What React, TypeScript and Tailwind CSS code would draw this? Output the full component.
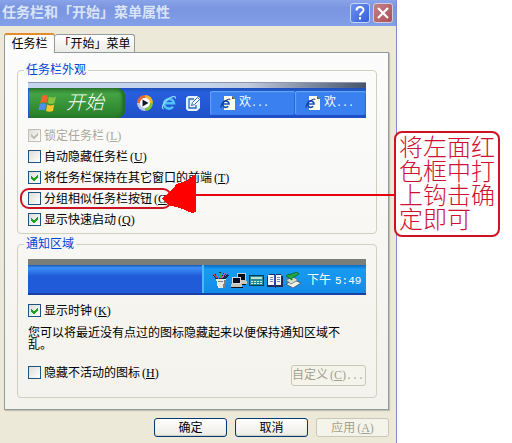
import React, { useState } from "react";

const AccessKey = ({ letter }: { letter: string }) => (
  <span className="ml-0.5">
    (<u className="underline-offset-1">{letter}</u>)
  </span>
);

const Check = ({
  label,
  letter,
  defaultChecked = false,
  disabled = false,
}: {
  label: string;
  letter: string;
  defaultChecked?: boolean;
  disabled?: boolean;
}) => {
  const [checked, setChecked] = useState(defaultChecked);
  return (
    <label className={disabled ? "flex h-[21px] items-center text-[#aca899]" : "flex h-[21px] items-center text-black"}>
      <span className="mr-[3px] grid size-[13px] shrink-0">
        <input
          type="checkbox"
          checked={checked}
          disabled={disabled}
          onChange={(e) => setChecked(e.target.checked)}
          className="col-start-1 row-start-1 size-[13px] appearance-none border border-[#1d5281] bg-linear-to-br from-[#dcdcd7] to-white disabled:border-[#c2c0b4]"
        />
        {checked && (
          <svg viewBox="0 0 13 13" className="pointer-events-none z-10 col-start-1 row-start-1 size-[13px]" shapeRendering="crispEdges">
            <path d="M3 5v3l2 2h1l4-4V3L6 7H5z" fill={disabled ? "#c2c0b4" : "#21a121"} />
          </svg>
        )}
      </span>
      <span className="whitespace-nowrap">
        {label}
        <AccessKey letter={letter} />
      </span>
    </label>
  );
};

const WindowsFlag = () => (
  <svg viewBox="0 0 20 19" className="h-[19px] w-5 shrink-0">
    <path d="M4 2q3-2 6 0L8.500 9q-3-1.500-6.500 0z" fill="#f0632b" />
    <path d="M11 2.500q3.500 2 7 0L16.500 9q-3.500 2-7 0z" fill="#86c440" />
    <path d="M1.800 10q3-1.500 6.400 0L7 16.500q-3-1.500-6.500 0z" fill="#4c8ff0" />
    <path d="M9.200 10.500q3.500 2 7 0L15 17q-3.500 1.500-7 0z" fill="#fbc52c" />
  </svg>
);

const MediaPlayer = () => (
  <svg viewBox="0 0 16 16" className="size-4">
    <path d="M8 8V0a8 8 0 0 1 8 8z" fill="#f4b42a" />
    <path d="M8 8h8a8 8 0 0 1-8 8z" fill="#7cc142" />
    <path d="M8 8v8a8 8 0 0 1-8-8z" fill="#b9c6e8" />
    <path d="M8 8H0a8 8 0 0 1 8-8z" fill="#ec6433" />
    <circle cx="8" cy="8" r="5" fill="#fff" />
    <path d="M5.500 4.500v7L11.500 8z" fill="#101828" />
  </svg>
);

const Explorer = () => (
  <svg viewBox="0 0 16 16" className="size-4" fill="none">
    <path d="M4 8.300h9a5 4.800 0 1 0-1 3.500" stroke="#4fc3f7" strokeWidth="2.600" />
    <path d="M2.500 14C0 13 2 8.500 6 5s9-5 8.500-1.500" stroke="#8fdcff" strokeWidth="1.200" />
  </svg>
);

const ShowDesktop = () => (
  <svg viewBox="0 0 16 16" className="size-4" fill="none">
    <path d="M3 1h9l3 2v10l-3 3H3l-2-2V3z" fill="#e4f2ff" />
    <path d="M9 4H4v9h7v-3" stroke="#2c6cb8" strokeWidth="1.300" />
    <path d="M6.500 10.500l1-3L12.500 2.500l2 2-5 5z" fill="#fff" stroke="#2c6cb8" />
  </svg>
);

const PageIcon = () => (
  <svg viewBox="0 0 16 16" className="size-4 shrink-0" fill="none">
    <path d="M4 1h8l3 3v11H4z" fill="#fdfceb" />
    <path d="M12 1v3h3z" fill="#5f5b3c" />
    <path d="M3 9h6a3.200 3.200 0 1 0-.8 2.300" stroke="#1553b8" strokeWidth="1.700" />
    <path d="M1.500 13C0 11.500 2 8 5 6s5.500-2.500 5-1" stroke="#102c78" />
  </svg>
);

const TrayIcons = () => (
  <>
    <svg viewBox="0 0 16 16" className="size-4" shapeRendering="crispEdges">
      <path d="M4 7L1 2M7 7V0M9 7l3-6M11 7l4-4" stroke="#162b50" strokeWidth="2.500" />
      <path d="M4 6L1 2" stroke="#e03838" strokeWidth="1.500" />
      <path d="M7 6V1" stroke="#38b048" strokeWidth="1.500" />
      <path d="M9 6l3-5" stroke="#d052c0" strokeWidth="1.500" />
      <path d="M3 7h10l-1 9H5z" fill="#e7e7df" />
      <path d="M11 8h2l-1 8h-2zM5 9h5v1H5z" fill="#7d8288" />
    </svg>
    <svg viewBox="0 0 16 16" className="size-4" shapeRendering="crispEdges">
      <path d="M6 1h9v8h1v3H6z" fill="#c8c8c0" />
      <path d="M7 2h7v6H7z" fill="#050a18" />
      <path d="M1 5h9v7H1z" fill="#d8d8d0" />
      <path d="M2 6h7v5H2z" fill="#080c20" />
      <path d="M0 12h11v3H0z" fill="#c5c5bb" />
      <path d="M0 15h12M11 12h4" stroke="#111" />
    </svg>
    <svg viewBox="0 0 16 16" className="size-4" shapeRendering="crispEdges">
      <path d="M0 3h15v11H0z" fill="#063c58" />
      <path d="M1 4h13v9H1z" fill="#258c9a" />
      <path d="M2 5h11v2H2z" fill="#b8e4cc" />
      <path d="M2 9h2v1H2zM5 9h2v1H5zM8 9h2v1H8zM11 9h2v1h-2zM2 11h2v1H2zM5 11h2v1H5zM8 11h2v1H8zM11 11h2v1h-2z" fill="#d5eee0" />
    </svg>
    <svg viewBox="0 0 16 16" className="size-4" shapeRendering="crispEdges">
      <path d="M0 4h2V2h5l1 1 1-1h5v2h2v11H9l-1 1-1-1H0z" fill="#1b2b58" />
      <path d="M1 3h6v10H1zM9 3h5v10H9z" fill="#f7f7ff" />
      <path d="M3 5h3M3 7h3M3 9h3M10 5h3M10 7h3M10 9h3" stroke="#7b83a8" />
      <path d="M7 3h2v11H7z" fill="#2947a0" />
    </svg>
    <svg viewBox="0 0 16 16" className="size-4">
      <path d="M1 12l8-4 7 3-8 5z" fill="#f0f2e6" stroke="#445" strokeWidth=".7" />
      <path d="M1 8l7-3 5 3-7 4z" fill="#d5e0c8" stroke="#567" strokeWidth=".7" />
      <path d="M1 4l3-2v1l8-3 2 2-7 4v2z" fill="#20ab3a" stroke="#075c1c" strokeWidth=".7" />
    </svg>
  </>
);

const TaskButton = () => (
  <div className="flex h-full items-center rounded-[2px] border-l border-[#5ba0ff] bg-[#3b80f0] pl-[9px] text-white shadow-[inset_0_1px_1px_#6aa8ff,inset_-1px_0_1px_#2a5fd0]">
    <PageIcon />
    <span className="ml-[3px] whitespace-nowrap">
      欢<span className="font-['Liberation_Mono',monospace] text-[10px]">...</span>
    </span>
  </div>
);

const TaskbarPreview = () => (
  <div className="mt-1 h-9">
    <div className="h-1.5 border-t border-[#8c98ae] bg-linear-to-r from-[#c5d6ee] from-50% via-[#c0cbe0] via-65% to-[#48546c]" />
    <div className="flex h-[30px] bg-linear-to-b from-[#1d50b8] via-[#285fde] via-15% to-[#1e4fc8] pl-px">
      <div className="flex w-24 items-center rounded-r-[8px] bg-linear-to-b from-[#2f7a2f] via-[#44a444] via-20% to-[#277c27] pl-[9px] shadow-[inset_-3px_0_3px_#236b28]">
        <WindowsFlag />
        <span className="ml-2 text-[19px] leading-5 font-light text-white italic">开始</span>
      </div>
      <div className="flex w-[85px] items-center gap-2 pl-3">
        <MediaPlayer />
        <Explorer />
        <ShowDesktop />
      </div>
      <div className="grid min-w-0 flex-1 grid-cols-[85px_1fr] py-[3px]">
        <TaskButton />
        <TaskButton />
      </div>
    </div>
  </div>
);

const TrayPreview = () => (
  <div className="mt-[7px] h-9">
    <div className="h-1.5 bg-[#7b7d7b]" />
    <div className="flex h-[30px] border-b-2 border-[#1941a5] bg-linear-to-b from-[#1d55b8] via-[#3d8ff5] via-10% to-[#205bda] to-40%">
      <div className="flex-1" />
      <div className="flex w-[164px] items-center gap-0.5 border-l-2 border-[#45bdf5] bg-linear-to-b from-[#0c69c4] via-[#189bf2] via-15% to-[#128be8] pt-0.5 pl-[9px] text-white">
        <TrayIcons />
        <span className="ml-1 whitespace-nowrap">
          下午
          <span className="ml-1 font-['Liberation_Mono',monospace] text-[11px]">5:49</span>
        </span>
      </div>
    </div>
  </div>
);

// highlight ring round the grouping option and the arrow that leads to the note
const Pointer = () => (
  <>
    <div className="pointer-events-none absolute -left-2 top-0 h-[21px] w-[152px] rounded-[9px] border-2 border-[#cc1424]" />
    <div className="pointer-events-none absolute -right-7 left-[166px] top-[6px] h-0.5 bg-[#e60010]" />
    <svg viewBox="0 0 34 39" className="pointer-events-none absolute left-[134px] -top-[14px] h-[39px] w-[34px]" shapeRendering="crispEdges">
      <path d="M0 24l4-3 3-3 5-4 2-4 10-3L34 0v38l-4 1-12-5-12-3z" fill="#ff0000" />
    </svg>
  </>
);

const PushButton = ({ children, disabled = false }: { children: React.ReactNode; disabled?: boolean }) => (
  <button
    type="button"
    disabled={disabled}
    className="h-[19px] w-[73px] rounded-[3px] border border-[#003c74] bg-linear-to-b from-white to-[#ecebe5] shadow-[inset_0_-1px_1px_#cfccc0] disabled:border-[#c9c7ba] disabled:bg-[#f5f4ea] disabled:bg-none disabled:text-[#a1a192] disabled:shadow-none"
  >
    {children}
  </button>
);

const TitleBar = () => (
  <header className="flex h-[26px] items-center gap-[3px] bg-linear-to-b from-[#8aa4ea] via-[#7b95df] via-30% to-[#819fe8] pr-[3px] pl-0.5">
    <h1 className="flex-1 text-[14px] leading-5 font-bold whitespace-nowrap text-[#d8e4f8]">任务栏和「开始」菜单属性</h1>
    <button type="button" aria-label="帮助" className="flex size-5 items-center justify-center rounded-[3px] border border-[#c5d4f8] bg-linear-to-br from-[#6c90ee] to-[#3560d8]">
      <svg viewBox="0 0 14 14" className="size-3.5" fill="none" stroke="#fff" strokeWidth="2">
        <path d="M3.500 4.500C3.500 0 10.500 0 10.500 4 10.500 6.500 7 6.500 7 9.500M7 11v2.500" />
      </svg>
    </button>
    <button type="button" aria-label="关闭" className="flex size-5 items-center justify-center rounded-[3px] border border-[#d5c8e0] bg-linear-to-br from-[#c48088] to-[#a85058]">
      <svg viewBox="0 0 14 14" className="size-3.5" fill="none" stroke="#fff" strokeWidth="2.200">
        <path d="M2 2l10 10M12 2L2 12" />
      </svg>
    </button>
  </header>
);

const groupBox = "min-w-0 rounded-[4px] border border-[#d0d0bf] px-2.5";
const legendText = "-ml-1 px-0.5 leading-4 text-[#0046d5]";

const App = () => {
  return (
    <div className="flex items-start bg-white font-['Liberation_Serif','Noto_Sans_CJK_SC',serif] text-[12px] leading-3 text-black">
      <main className="min-w-0 flex-1 border-r border-[#7b8ad8] bg-[#ece9d8]">
        <TitleBar />
        <div className="pt-1.5 pr-[7px] pb-1.5 pl-1">
          <div role="tablist" className="flex h-5 items-end">
            <button type="button" role="tab" aria-selected="true" className="z-10 -mb-px h-5 w-[51px] rounded-t-[3px] border-x border-t-2 border-x-[#919b9c] border-t-[#e68b2c] bg-[#fcfcfc]">
              任务栏
            </button>
            <button type="button" role="tab" aria-selected="false" className="h-[18px] w-20 rounded-t-[3px] border border-b-0 border-l-0 border-[#919b9c] bg-linear-to-b from-white to-[#ecebe6] whitespace-nowrap">
              「开始」菜单
            </button>
          </div>
          <div role="tabpanel" className="border border-[#919b9c] bg-linear-to-b from-[#fcfcfc] to-[#f3f2ec] pt-[9px] pr-[11px] pb-[11px] pl-3 shadow-[1px_1px_1px_#c4c1b0]">
            <fieldset className={`${groupBox} pb-[3px]`}>
              <legend className={legendText}>任务栏外观</legend>
              <TaskbarPreview />
              <div className="mt-[7px]">
                <Check label="锁定任务栏" letter="L" defaultChecked disabled />
                <Check label="自动隐藏任务栏" letter="U" />
                <Check label="将任务栏保持在其它窗口的前端" letter="T" defaultChecked />
                <div className="relative">
                  <Check label="分组相似任务栏按钮" letter="G" />
                  <Pointer />
                </div>
                <Check label="显示快速启动" letter="Q" defaultChecked />
              </div>
            </fieldset>
            <fieldset className={`${groupBox} mt-0.5 pb-[11px]`}>
              <legend className={legendText}>通知区域</legend>
              <TrayPreview />
              <div className="mt-[5px]">
                <Check label="显示时钟" letter="K" defaultChecked />
              </div>
              <p className="mt-1.5 pr-[18px]">您可以将最近没有点过的图标隐藏起来以便保持通知区域不乱。</p>
              <div className="mt-[11px] flex items-start justify-between">
                <Check label="隐藏不活动的图标" letter="H" />
                <button type="button" disabled className="mt-[3px] h-[21px] w-[75px] rounded-[3px] border border-[#c9c7ba] bg-[#f5f4ea] text-left whitespace-nowrap text-[#a1a192]">
                  自定义
                  <AccessKey letter="C" />
                  <span className="font-['Liberation_Mono',monospace] text-[10px]">...</span>
                </button>
              </div>
            </fieldset>
          </div>
          <div className="mt-2 flex justify-end gap-2">
            <PushButton>确定</PushButton>
            <PushButton>取消</PushButton>
            <PushButton disabled>
              应用
              <AccessKey letter="A" />
            </PushButton>
          </div>
        </div>
      </main>
      <aside className="z-20 mt-[131px] mr-3 -ml-[3px] w-[106px] shrink-0 rounded-[8px] border-2 border-[#cc1424] bg-white px-[3px] py-[3px] text-[24px] leading-6 font-light text-[#d01030]">
        将左面红色框中打上钩击确定即可
      </aside>
    </div>
  );
};

export default App;
